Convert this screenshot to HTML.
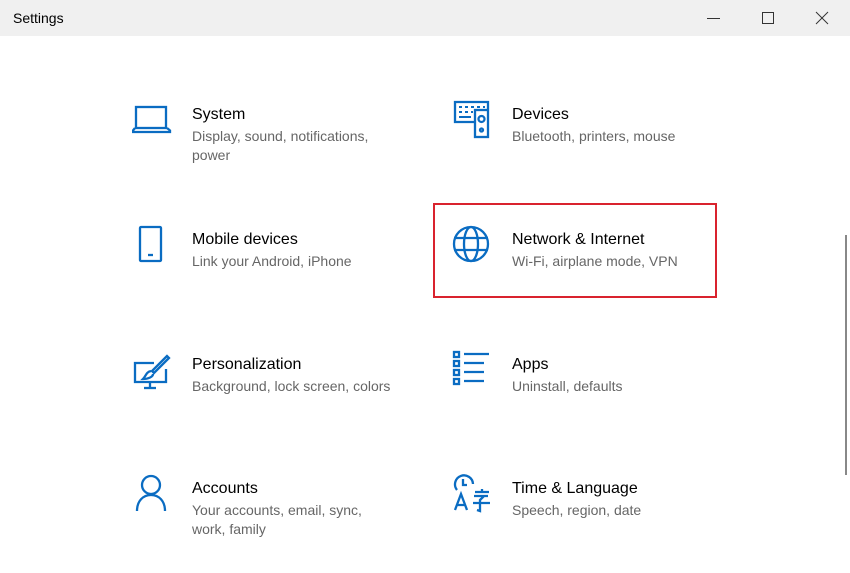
<!DOCTYPE html>
<html><head><meta charset="utf-8"><style>
body{margin:0;width:850px;height:573px;background:#fff;font-family:"Liberation Sans",Arial,sans-serif;position:relative;overflow:hidden}
.tb{position:absolute;left:0;top:0;width:850px;height:36px;background:#f0f0f0}
.tb .t{position:absolute;left:13px;top:10px;font-size:14px;color:#000}
.item{position:absolute}
.item .h{font-size:16px;color:#000;line-height:20px}
.item .s{font-size:14px;color:#666;line-height:19px;margin-top:2px}
svg.i{position:absolute}
</style></head><body>
<div class="tb"><div class="t">Settings</div>
<svg style="position:absolute;left:700px;top:8px" width="140" height="20" fill="none" stroke="#333" stroke-width="1">
<line x1="7" y1="10.5" x2="20" y2="10.5"/>
<rect x="62.5" y="4.5" width="11" height="11"/>
<line x1="116" y1="4" x2="128" y2="16"/><line x1="128" y1="4" x2="116" y2="16"/>
</svg></div>
<div style="position:absolute;left:845px;top:235px;width:2px;height:240px;background:#888"></div>

<svg class="i" style="left:132px;top:105px" width="40" height="30" fill="none" stroke="#0a6cc2" stroke-width="2.3">
<rect x="4" y="2" width="30" height="21"/><path d="M3 23 L1 25.5 V27 H38 V25.5 L35 23"/></svg>
<div class="item" style="left:192px;top:105px"><div class="h">System</div><div class="s">Display, sound, notifications,<br>power</div></div>

<svg class="i" style="left:452px;top:100px" width="40" height="40" fill="none" stroke="#0a6cc2" stroke-width="2.3">
<path d="M24 22 H3 V2 H36 V9"/><rect x="23" y="10" width="13" height="27"/><circle cx="29.5" cy="19" r="3"/><circle cx="29.5" cy="30" r="1.5"/>
<path d="M7 7h3M13 7h3M19 7h3M25 7h3M31 7h2M7 12h3M13 12h3M19 12h2M7 17h12" stroke-width="2"/></svg>
<div class="item" style="left:512px;top:105px"><div class="h">Devices</div><div class="s">Bluetooth, printers, mouse</div></div>

<svg class="i" style="left:138px;top:225px" width="28" height="40" fill="none" stroke="#0a6cc2" stroke-width="2.3">
<rect x="2" y="2" width="21" height="34" rx="1"/><line x1="10" y1="30" x2="15" y2="30"/></svg>
<div class="item" style="left:192px;top:230px"><div class="h">Mobile devices</div><div class="s">Link your Android, iPhone</div></div>

<div style="position:absolute;left:433px;top:203px;width:280px;height:91px;border:2px solid #d9232e"></div>
<svg class="i" style="left:452px;top:225px" width="40" height="40" fill="none" stroke="#0a6cc2" stroke-width="2.3">
<circle cx="19" cy="19" r="17"/><ellipse cx="19" cy="19" rx="7" ry="17"/><line x1="2" y1="13" x2="36" y2="13"/><line x1="2" y1="25" x2="36" y2="25"/></svg>
<div class="item" style="left:512px;top:230px"><div class="h">Network &amp; Internet</div><div class="s">Wi-Fi, airplane mode, VPN</div></div>

<svg class="i" style="left:132px;top:353px" width="40" height="40" fill="none" stroke="#0a6cc2" stroke-width="2.3">
<path d="M22 10 H3 V29 H34 V16"/><line x1="18" y1="29" x2="18" y2="35"/><line x1="12" y1="35" x2="24" y2="35"/>
<path d="M35 3 L20 18 L22 20 L37 5 Z"/><path d="M19 18 C14 19 14 23 11 26 C16 26 21 24 21 21"/></svg>
<div class="item" style="left:192px;top:355px"><div class="h">Personalization</div><div class="s">Background, lock screen, colors</div></div>

<svg class="i" style="left:452px;top:350px" width="40" height="40" fill="none" stroke="#0a6cc2" stroke-width="2.3">
<rect x="2" y="2" width="5" height="5"/><rect x="2" y="11" width="5" height="5"/><rect x="2" y="20" width="5" height="5"/><rect x="2" y="29" width="5" height="5"/>
<line x1="12" y1="4" x2="37" y2="4"/><line x1="12" y1="13" x2="32" y2="13"/><line x1="12" y1="22" x2="32" y2="22"/><line x1="12" y1="31" x2="32" y2="31"/></svg>
<div class="item" style="left:512px;top:355px"><div class="h">Apps</div><div class="s">Uninstall, defaults</div></div>

<svg class="i" style="left:134px;top:474px" width="36" height="40" fill="none" stroke="#0a6cc2" stroke-width="2.3">
<circle cx="17" cy="11" r="9"/><path d="M3 37 C3 27 9 21 17 21 C25 21 31 27 31 37"/></svg>
<div class="item" style="left:192px;top:479px"><div class="h">Accounts</div><div class="s">Your accounts, email, sync,<br>work, family</div></div>

<svg class="i" style="left:452px;top:474px" width="40" height="42" fill="none" stroke="#0a6cc2" stroke-width="2.3">
<path d="M5 16 A9 9 0 1 1 21 10"/><path d="M11 5 V11 H15"/>
<path d="M3 36 L9 20 L15 36 M5 31 H13"/>
<path d="M23 18 H37 M30 15 V18 M22 22 H36 M32 22 L28 26 V37 L25 36 M21 29 H38"/></svg>
<div class="item" style="left:512px;top:479px"><div class="h">Time &amp; Language</div><div class="s">Speech, region, date</div></div>
</body></html>
